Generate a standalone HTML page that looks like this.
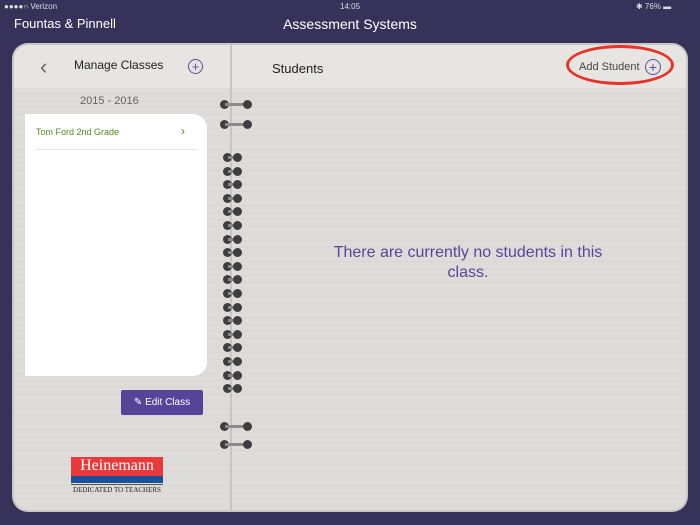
<!DOCTYPE html><html><head><style>
body{margin:0;width:700px;height:525px;overflow:hidden;background:#37325a;font-family:"Liberation Sans",sans-serif;position:relative}
.a{position:absolute}
.nb{left:14px;top:45px;width:672px;height:465px;background:#dddcd8;border-radius:14px;box-shadow:0 0 0 2px #c9c8c4;overflow:hidden;
background-image:repeating-linear-gradient(#dddcd8 0 6px,#d8d7d3 6px 7px)}
.hd{left:0;top:0;width:672px;height:43px;background:#e6e5e2}
.ring{position:absolute;height:9px}
.ring i{position:absolute;top:0;width:9px;height:9px;border-radius:50%;background:#3e3e3e}
.ring b{position:absolute;top:3px;height:3px;background:#8a8a8a}
</style></head><body>
<div class="a" style="left:4px;top:2px;font-size:8px;color:#ddd">●●●●○ Verizon</div>
<div class="a" style="left:340px;top:2px;font-size:8px;color:#ddd">14:05</div>
<div class="a" style="left:636px;top:2px;font-size:8px;color:#ddd">✱ 76% ▬</div>
<div class="a" style="left:14px;top:16px;font-size:13px;color:#fff">Fountas &amp; Pinnell</div>
<div class="a" style="left:0;width:700px;text-align:center;top:16px;font-size:14px;color:#fff">Assessment Systems</div>
<div class="a nb">
 <div class="a hd"></div>
 <div class="a" style="left:216px;top:0;width:2px;height:465px;background:#c6c5c1"></div>
 <div class="a" style="left:26px;top:9px;font-size:22px;color:#666">‹</div>
 <div class="a" style="left:60px;top:13px;font-size:12px;color:#222">Manage Classes</div>
 <div class="a" style="left:174px;top:14px;width:13px;height:13px;border:1px solid #5b4ea0;border-radius:50%;color:#5b4ea0;font-size:13px;line-height:13px;text-align:center">+</div>
 <div class="a" style="left:258px;top:16px;font-size:13px;color:#222">Students</div>
 <div class="a" style="left:565px;top:16px;font-size:11px;color:#444">Add Student</div>
 <div class="a" style="left:631px;top:14px;width:14px;height:14px;border:1px solid #5b4ea0;border-radius:50%;color:#5b4ea0;font-size:14px;line-height:14px;text-align:center">+</div>
 <div class="a" style="left:552px;top:0;width:108px;height:40px;border:3px solid #e8332b;border-radius:50%;box-sizing:border-box"></div>
 <div class="a" style="left:66px;top:50px;font-size:11px;color:#666">2015 - 2016</div>
 <div class="a" style="left:11px;top:69px;width:182px;height:262px;background:#fff;border-radius:0 14px 14px 0"></div>
 <div class="a" style="left:22px;top:82px;font-size:9px;color:#4f8a1c">Tom Ford 2nd Grade</div>
 <div class="a" style="left:167px;top:79px;font-size:12px;color:#4f8a1c">›</div>
 <div class="a" style="left:22px;top:104px;width:162px;height:1px;background:#e6e6e6"></div>
 <div class="a" style="left:107px;top:345px;width:82px;height:25px;background:#54459a;border-radius:2px;color:#fff;font-size:10px;line-height:25px;text-align:center">✎ Edit Class</div>
 <div class="a" style="left:57px;top:412px;width:92px;height:20px;background:#e83a3c;color:#fff;font-family:'Liberation Serif',serif;font-size:16px;line-height:18px;text-align:center">Heinemann</div>
 <div class="a" style="left:57px;top:431px;width:92px;height:7px;background:#1c4f9c"></div>
 <div class="a" style="left:57px;top:439px;width:92px;height:1px;background:#555"></div>
 <div class="a" style="left:57px;top:441px;width:92px;font-family:'Liberation Serif',serif;font-size:7px;color:#222;text-align:center">DEDICATED TO TEACHERS</div>
 <div class="a" style="left:304px;top:198px;width:300px;text-align:center;font-size:16px;color:#55479a;line-height:20px">There are currently no students in this class.</div>
</div>
<div id="r"></div>
<script>
var h='';
function ring(x,y,w){h+='<div class="ring" style="left:'+x+'px;top:'+y+'px;width:'+w+'px"><i style="left:0"></i><b style="left:5px;width:'+(w-10)+'px"></b><i style="right:0"></i></div>';}
[100,120,422,440].forEach(function(y){ring(220,y,32)});
for(var y=153;y<385;y+=13.6){ring(223,Math.round(y),19);}
document.getElementById('r').innerHTML=h;
</script>
</body></html>
